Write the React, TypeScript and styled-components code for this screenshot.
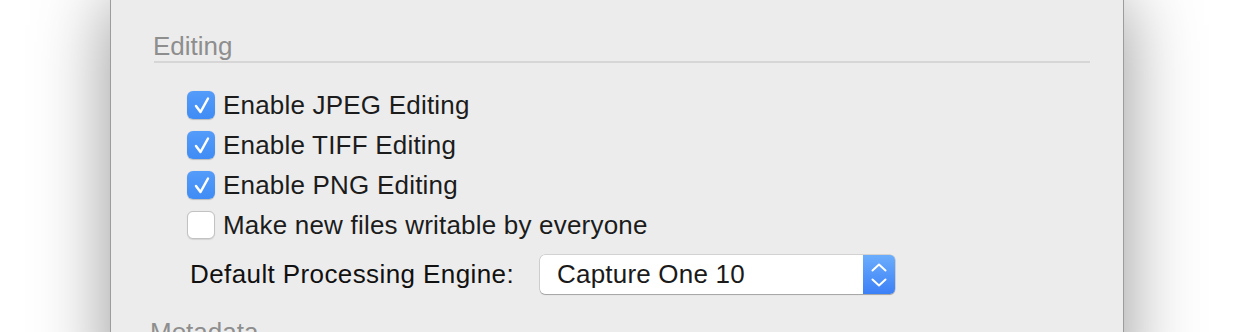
import React from "react";
import styled, { createGlobalStyle } from "styled-components";

const Global = createGlobalStyle`
  html, body { margin: 0; padding: 0; background: #ffffff; }
  body { width: 1236px; height: 332px; overflow: hidden; font-family: "Liberation Sans", Arial, sans-serif; }
`;

const Page = styled.div`
  width: 1236px;
  height: 332px;
  overflow: hidden;
  display: flex;
  align-items: flex-start;
  background: #ffffff;
`;

const Window = styled.div`
  margin-left: 110px;
  width: 1014px;
  min-height: 400px;
  flex-shrink: 0;
  background: #ececec;
  border-left: 1px solid #9c9c9c;
  border-right: 1px solid #9c9c9c;
  box-shadow: 0 0 70px rgba(0, 0, 0, 0.42);
  display: flex;
  flex-direction: column;
  padding: 33px 33px 0 42px;
  box-sizing: border-box;
`;

const SectionTitle = styled.div<{ $shift?: number }>`
  font-size: 26px;
  line-height: 26px;
  color: #8e8e8e;
  margin-left: ${(p) => p.$shift ?? 0}px;
`;

const Separator = styled.div`
  height: 2px;
  flex-shrink: 0;
  background: #d6d6d6;
  margin: 2px 0 0 1px;
`;

const Options = styled.div`
  display: flex;
  flex-direction: column;
  padding: 28px 0 0 34px;
  gap: 12px;
`;

const Row = styled.label`
  display: flex;
  align-items: center;
  gap: 8px;
  height: 28px;
`;

const Box = styled.span<{ $checked: boolean }>`
  width: 28px;
  height: 28px;
  flex-shrink: 0;
  box-sizing: border-box;
  border-radius: 6px;
  display: flex;
  background: ${(p) => (p.$checked ? "linear-gradient(#549cfa, #3f8cf5)" : "#ffffff")};
  border: ${(p) => (p.$checked ? "none" : "1px solid #c2c2c2")};
  box-shadow: ${(p) => (p.$checked ? "0 0.5px 1px rgba(0,0,0,0.2)" : "0 0.5px 1px rgba(0,0,0,0.1)")};
`;

const Label = styled.span`
  font-size: 26px;
  line-height: 28px;
  color: #1c1c1c;
  letter-spacing: 0.2px;
`;

const EngineRow = styled.div`
  display: grid;
  grid-template-columns: 350px 355px;
  align-items: center;
  padding: 16px 0 0 37px;
`;

const EngineLabel = styled.span`
  font-size: 26px;
  color: #111111;
  letter-spacing: 0.4px;
`;

const Select = styled.div`
  width: 355px;
  height: 39px;
  box-sizing: border-box;
  display: flex;
  background: #ffffff;
  border-radius: 5px;
  box-shadow: 0 0 0 0.5px rgba(0, 0, 0, 0.22), 0 1px 1px rgba(0, 0, 0, 0.22);
  overflow: hidden;
`;

const SelectText = styled.span`
  flex: 1;
  display: flex;
  align-items: center;
  padding-left: 17px;
  font-size: 26px;
  color: #1a1a1a;
  letter-spacing: 0.2px;
`;

const Stepper = styled.span`
  width: 32px;
  display: flex;
  align-items: center;
  justify-content: center;
  background: linear-gradient(#6badfc, #3c80f7);
`;

const Footer = styled.div`
  padding-top: 25px;
`;

const Check = () => (
  <svg width="28" height="28" viewBox="0 0 28 28">
    <path d="M9 15 L13.5 21 L21 7.5" fill="none" stroke="#ffffff" strokeWidth="2.5" strokeLinecap="round" strokeLinejoin="round" />
  </svg>
);

const Chevrons = () => (
  <svg width="18" height="30" viewBox="0 0 18 30">
    <path d="M2.5 10.5 L9 4.5 L15.5 10.5" fill="none" stroke="#ffffff" strokeWidth="2" strokeLinecap="round" strokeLinejoin="round" />
    <path d="M2.5 19.5 L9 25.5 L15.5 19.5" fill="none" stroke="#ffffff" strokeWidth="2" strokeLinecap="round" strokeLinejoin="round" />
  </svg>
);

const options = [
  { text: "Enable JPEG Editing", checked: true },
  { text: "Enable TIFF Editing", checked: true },
  { text: "Enable PNG Editing", checked: true },
  { text: "Make new files writable by everyone", checked: false },
];

export default function App() {
  return (
    <Page>
      <Global />
      <Window>
        <SectionTitle>Editing</SectionTitle>
        <Separator />
        <Options>
          {options.map((o) => (
            <Row key={o.text}>
              <Box $checked={o.checked}>{o.checked && <Check />}</Box>
              <Label>{o.text}</Label>
            </Row>
          ))}
        </Options>
        <EngineRow>
          <EngineLabel>Default Processing Engine:</EngineLabel>
          <Select>
            <SelectText>Capture One 10</SelectText>
            <Stepper>
              <Chevrons />
            </Stepper>
          </Select>
        </EngineRow>
        <Footer>
          <SectionTitle $shift={-3}>Metadata</SectionTitle>
        </Footer>
      </Window>
    </Page>
  );
}
